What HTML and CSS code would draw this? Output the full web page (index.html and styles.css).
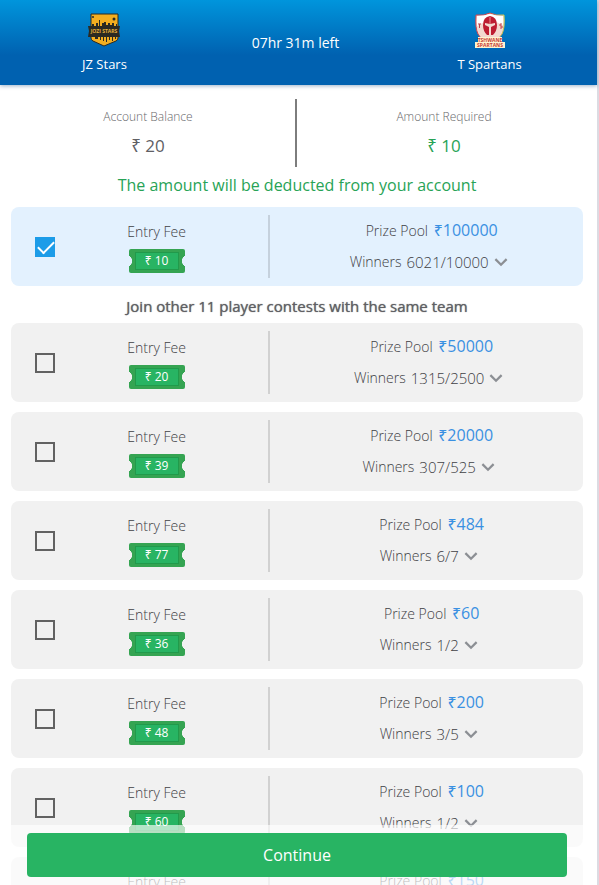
FILE: index.html
```
<!DOCTYPE html>
<html lang="en">
<head>
    <meta charset="UTF-8">
    <meta name="viewport" content="width=device-width, initial-scale=1.0">
    <title>Join Contests</title>
    <link rel="stylesheet" href="styles.css">
</head>
<body>
    <div class="app">
        <header class="match-header">
            <div class="team">
                <svg class="team-logo" viewBox="0 0 36 36" aria-hidden="true">
                    <path d="M5 2h27v24q0 2-2 3l-12 5L7 29q-2-1-2-3z" fill="#f3ae20" stroke="#2b2a22" stroke-width="1"/>
                    <path d="M3 18v-4h3v-2h2v2h2v-3h2v3h1V8h1v6h2v-3h2v-1h2v3h2v-2h2v2h2v-2h2v3h2v-2h1v2h2v4z" fill="#2b2a22"/>
                    <path d="M2 14h32l-1 5 1 6h-4v2h-1v-2h-2v4h-1v-4h-2v3h-1v-3h-2v5h-1v-5h-2v4h-1v-4h-2v3h-1v-3h-2v2H9v-2H2l1-6z" fill="#2b2a22"/>
                    <circle cx="28" cy="7" r="1.5" fill="#2b2a22"/>
                    <circle cx="7" cy="5" r="1" fill="#2b2a22"/>
                    <text x="18" y="21" class="logo-text logo-text-gold">JOZI STARS</text>
                </svg>
                <span>JZ Stars</span>
            </div>
            <div class="time-left">07hr 31m left</div>
            <div class="team">
                <svg class="team-logo" viewBox="0 0 36 36" aria-hidden="true">
                    <defs>
                        <linearGradient id="shield-edge">
                            <stop offset="0.5" stop-color="#d1424d"/>
                            <stop offset="1" stop-color="#c9cf50"/>
                        </linearGradient>
                    </defs>
                    <path d="M4 3q8 1 14-2 6 3 14 2 1 13-2 19-2 3-4 5H10q-2-2-4-5Q3 16 4 3z" fill="#f3d9cf" stroke="url(#shield-edge)" stroke-width="1"/>
                    <path d="M5 4q7 0 13-2 6 2 13 2v9l-9-4h-8l-9 5z" fill="#fff"/>
                    <path d="M18 4q7 1 7 9 0 6-4 10h-2v-8l4-2v-2l-5 1-5-1v2l4 2v8h-2q-4-4-4-10 0-8 7-9z" fill="#bd1d30"/>
                    <path d="M18 5v7" stroke="#e88f8c" stroke-width="1"/>
                    <path d="M6 12h3M7.500 12v4M30 12h-2v2h2v2h-2" fill="none" stroke="#c4424b" stroke-width="1"/>
                    <path d="M6 25h24v5h3v6H3v-6h3z" fill="#fff3cf"/>
                    <text x="18" y="30" class="logo-text logo-text-red">TSHWANE</text>
                    <text x="18" y="35" class="logo-text logo-text-red">SPARTANS</text>
                </svg>
                <span>T Spartans</span>
            </div>
        </header>

        <main class="content">
            <section class="balance">
                <div class="balance-item">
                    <span class="balance-label">Account Balance</span>
                    <span class="balance-value">₹ 20</span>
                </div>
                <div class="balance-item">
                    <span class="balance-label">Amount Required</span>
                    <span class="balance-value required">₹ 10</span>
                </div>
            </section>
            <p class="deduct-note">The amount will be deducted from your account</p>

            <div id="selected-contest"></div>
            <h2 class="list-title">Join other 11 player contests with the same team</h2>
            <div class="contest-list" id="other-contests"></div>
        </main>

        <footer class="bottom-bar">
            <button type="button" class="continue-btn">Continue</button>
        </footer>
    </div>

    <script>
        const contests = [
            { fee: 10, prize: 100000, winners: "6021/10000", selected: true },
            { fee: 20, prize: 50000, winners: "1315/2500" },
            { fee: 39, prize: 20000, winners: "307/525" },
            { fee: 77, prize: 484, winners: "6/7" },
            { fee: 36, prize: 60, winners: "1/2" },
            { fee: 48, prize: 200, winners: "3/5" },
            { fee: 60, prize: 100, winners: "1/2" },
            { fee: 55, prize: 150, winners: "1/3" }
        ];

        contests.forEach((contest, i) => {
            const card = document.createElement("article");
            card.classList.add("contest");
            if (contest.selected) {
                card.classList.add("selected");
            }
            card.innerHTML = `
                <div class="pick">
                    <input type="checkbox" id="contest-${i}" ${contest.selected ? "checked" : ""}>
                </div>
                <label class="entry" for="contest-${i}">
                    <span>Entry Fee</span>
                    <span class="ticket"><span class="ticket-price">₹ ${contest.fee}</span></span>
                </label>
                <div class="details">
                    <div class="prize">Prize Pool <span class="prize-amount">₹${contest.prize}</span></div>
                    <button type="button" class="winners">
                        <span>Winners</span>
                        <span class="winners-count">${contest.winners}</span>
                        <svg class="chevron" viewBox="0 0 12 8" aria-hidden="true"><path d="M1 1l5 5 5-5"/></svg>
                    </button>
                </div>
            `;

            const target = contest.selected ? "selected-contest" : "other-contests";
            document.getElementById(target).appendChild(card);
        });
    </script>
</body>
</html>
```
FILE: styles.css
```
* {
    margin: 0;
    padding: 0;
    box-sizing: border-box;
}

body {
    font-family: "Open Sans", "Noto Sans", sans-serif;
    font-size: 14px;
    line-height: 20px;
    color: #404044;
    background: #fff;
}

button {
    font: inherit;
    color: inherit;
    border: none;
    background: none;
    cursor: pointer;
}

.app {
    position: relative;
    display: flex;
    flex-direction: column;
    height: 100vh;
    border-right: 2px solid #dcdbe2;
}

/* Header */
.match-header {
    display: grid;
    grid-template-columns: 35% 29% 36%;
    align-items: center;
    padding: 12px 0 11px;
    color: #fff;
    font-size: 13px;
    font-weight: 500;
    background: linear-gradient(to bottom, #0095dc, #0061b0 65%, #0061b0);
    box-shadow: 0 1px 4px rgba(0, 60, 120, 0.4);
    z-index: 1;
}

.team {
    display: flex;
    flex-direction: column;
    align-items: center;
    gap: 6px;
}

.team-logo {
    width: 36px;
    height: 36px;
}

.logo-text {
    font-size: 5px;
    font-weight: 700;
    text-anchor: middle;
}

.logo-text-gold {
    fill: #e7b13b;
}

.logo-text-red {
    fill: #c73b35;
}

.time-left {
    text-align: center;
    font-size: 14px;
}

/* Scrolling content */
.content {
    flex: 1;
    min-height: 0;
    overflow-y: auto;
    scrollbar-width: none;
    padding: 14px 14px 68px 11px;
}

.balance {
    display: grid;
    grid-template-columns: 1fr 1fr;
}

.balance-item {
    display: flex;
    flex-direction: column;
    align-items: center;
    gap: 7px;
    padding: 8px 10px 9px 0;
    border-right: 2px solid #7d7d7d;
}

.balance-item + .balance-item {
    border-right: none;
    padding: 8px 0 9px 8px;
}

.balance-label {
    font-size: 12px;
    font-weight: 300;
    color: #68686c;
}

.balance-value {
    color: #606064;
    font-size: 17px;
    line-height: 24px;
}

.required,
.deduct-note {
    color: #28a356;
}

.deduct-note {
    margin: 6px 0 10px;
    font-size: 16px;
    line-height: 24px;
    text-align: center;
}

.list-title {
    margin: 10px 0 7px;
    color: #606064;
    font-size: 15px;
    font-weight: 500;
    text-align: center;
    text-shadow: 0 0 1px #68686c;
}

/* Contest cards */
.contest-list {
    display: flex;
    flex-direction: column;
    gap: 10px;
}

.contest {
    display: grid;
    grid-template-columns: 8% 37% 55%;
    padding: 8px 0;
    border-radius: 8px;
    background: #f1f1f1;
}

.selected {
    background: #e3f1fe;
}

.pick {
    display: flex;
    align-items: center;
    padding-left: 24px;
}

.pick input {
    appearance: none;
    flex: none;
    width: 20px;
    height: 20px;
    border: 2px solid #626262;
}

.pick input:checked {
    border: none;
    background: #1c9ce8;
}

.pick input:checked::before {
    content: "";
    display: block;
    width: 14px;
    height: 7px;
    margin: 4px 0 0 3px;
    border-left: 2px solid #fff;
    border-bottom: 2px solid #fff;
    transform: rotate(-45deg);
}

.entry {
    display: flex;
    flex-direction: column;
    align-items: center;
    gap: 7px;
    padding: 7px 12px 5px 0;
    font-weight: 300;
}

.ticket {
    padding: 3px 6px;
    border-radius: 2px;
    color: #fff;
    font-size: 12px;
    font-weight: 400;
    /* notches on both sides */
    background:
        radial-gradient(ellipse 3px 5px at left, transparent 95%, #35a452) left / 50% 100% no-repeat,
        radial-gradient(ellipse 3px 5px at right, transparent 95%, #35a452) right / 50% 100% no-repeat;
}

.ticket-price {
    display: block;
    min-width: 44px;
    border: 1px solid #219a4b;
    line-height: 16px;
    text-align: center;
    background: #28b463;
}

.details {
    display: flex;
    flex-direction: column;
    align-items: center;
    gap: 11px;
    padding: 5px 0 5px 4px;
    border-left: 2px solid rgba(0, 0, 0, 0.13);
    font-weight: 300;
}

.prize {
    padding-left: 6px;
}

.prize-amount {
    margin-left: 2px;
    color: #3a90e2;
    font-size: 16px;
    font-weight: 400;
}

.winners {
    display: flex;
    align-items: center;
    gap: 5px;
    font-weight: 300;
}

.winners-count {
    font-size: 15px;
}

.chevron {
    width: 14px;
    height: 9px;
    fill: none;
    stroke: #8c8f94;
    stroke-width: 2;
}

/* Bottom bar */
.bottom-bar {
    position: absolute;
    left: 0;
    right: 0;
    bottom: 0;
    padding: 8px 30px 8px 27px;
    background: rgba(255, 255, 255, 0.65);
    z-index: 2;
}

.continue-btn {
    display: block;
    width: 100%;
    padding: 10px;
    border-radius: 4px;
    color: #fff;
    font-size: 16px;
    font-weight: 500;
    line-height: 24px;
    background: #28b463;
}
```
